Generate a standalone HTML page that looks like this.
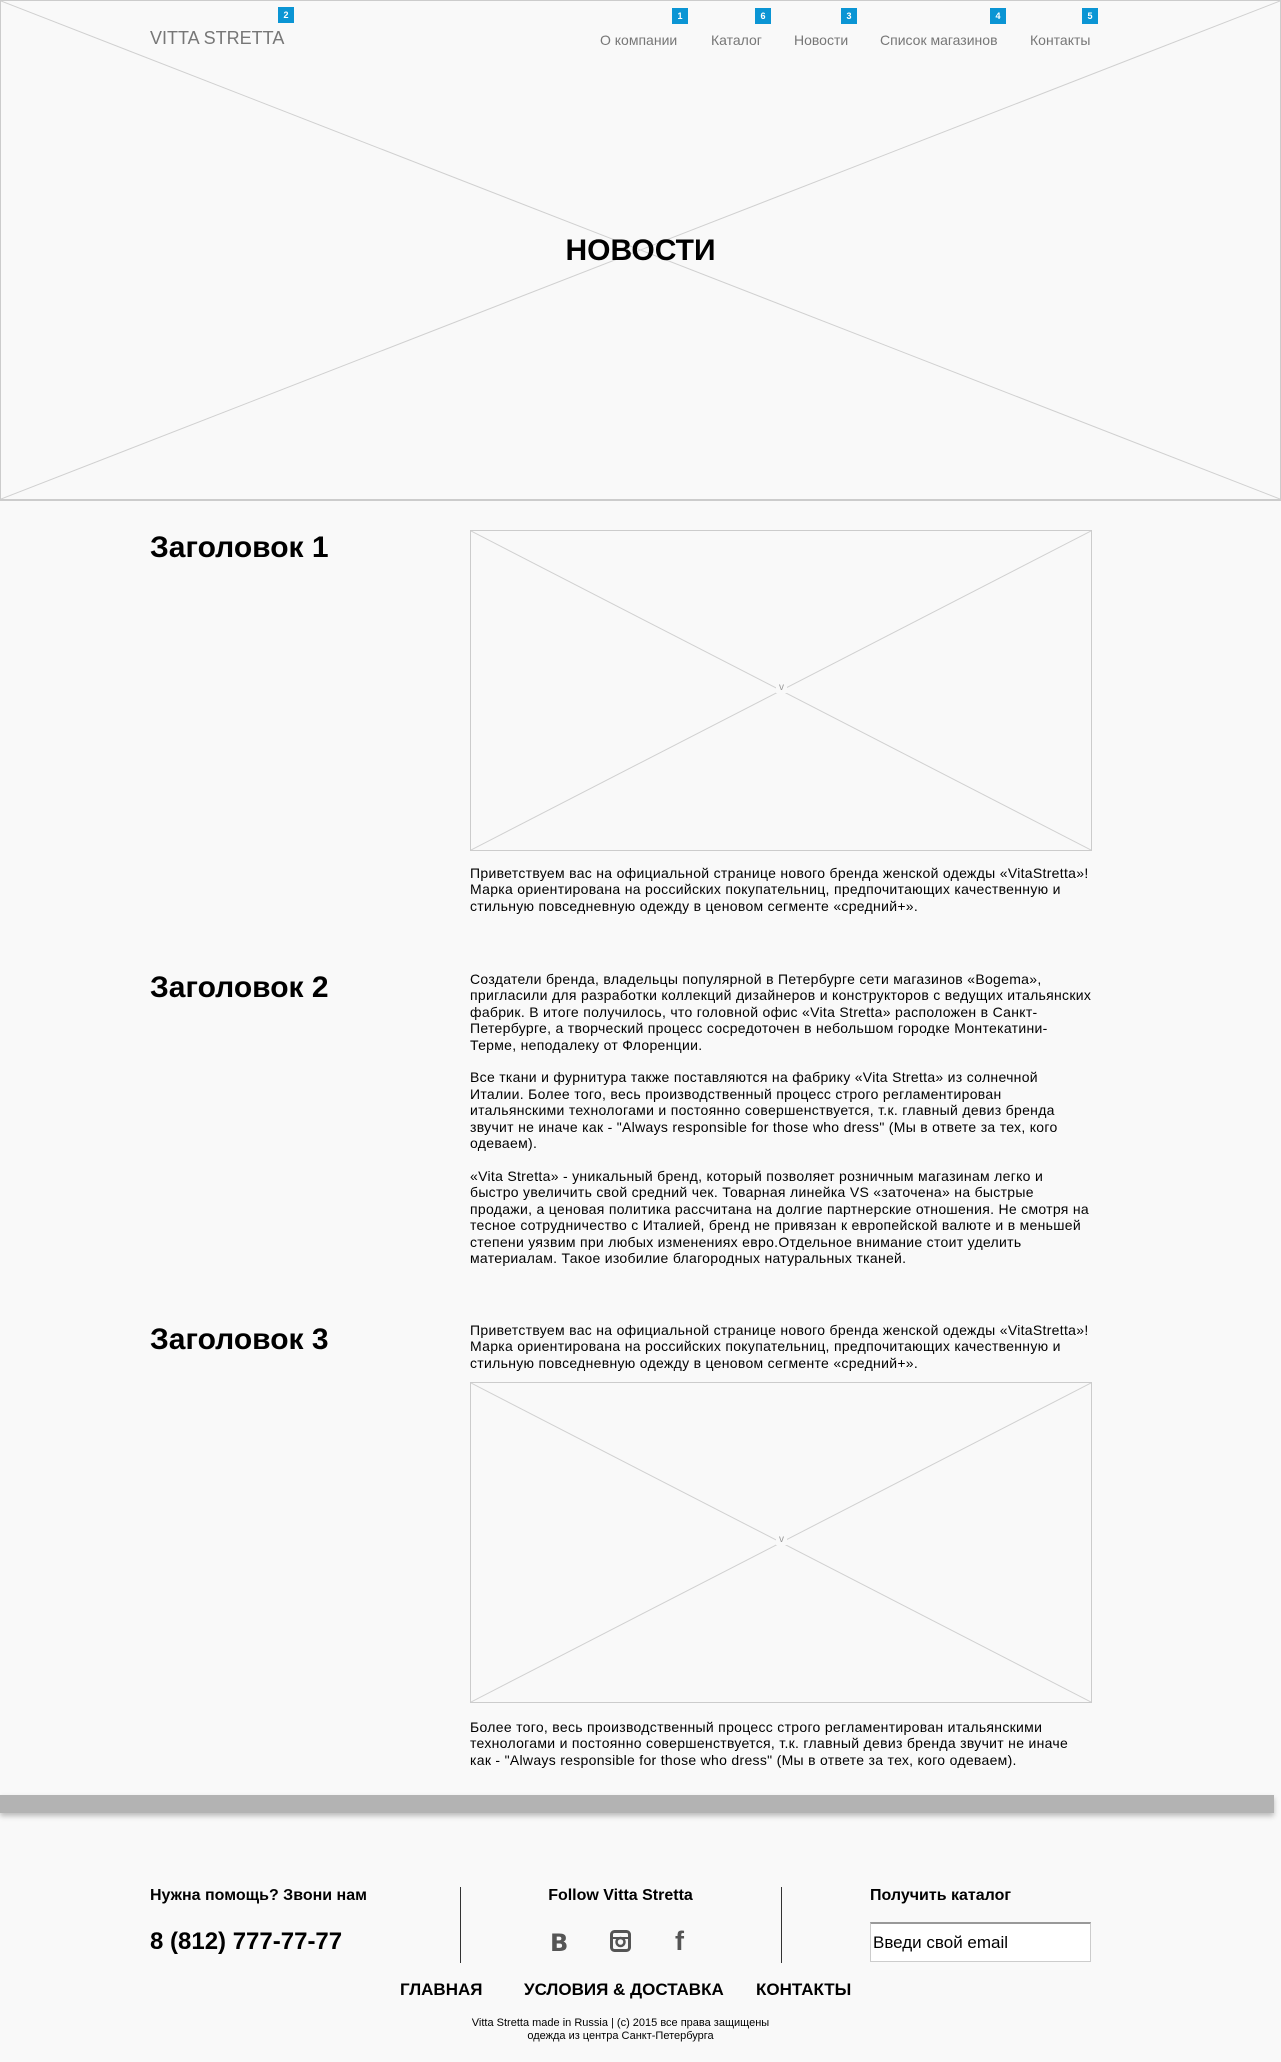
<!DOCTYPE html>
<html><head><meta charset="utf-8"><style>
*{margin:0;padding:0;box-sizing:border-box}
body{width:1281px;height:2062px;background:#f9f9f9;font-family:"Liberation Sans",Arial,sans-serif;position:relative;overflow:hidden;color:#000}
.a{position:absolute}
.ph{position:absolute;border:1px solid #ccc}
.ph svg{position:absolute;left:0;top:0;width:100%;height:100%}
.badge{position:absolute;width:16px;height:16px;background:#0b95d4;color:#fff;font-size:9px;font-weight:bold;text-align:center;line-height:16px}
.nav{position:absolute;top:32px;font-size:14px;color:#777;white-space:nowrap}
h2{position:absolute;left:150px;font-size:30px;font-weight:bold;white-space:nowrap}
.t{position:absolute;left:470px;font-size:14px;letter-spacing:0.3px;line-height:16.4px;white-space:nowrap}
.fh{position:absolute;top:1887px;font-size:16px;font-weight:bold;white-space:nowrap}
.fl{position:absolute;top:1980px;font-size:17px;font-weight:bold;white-space:nowrap}
</style></head><body>
<div class="ph" style="left:0;top:0;width:1281px;height:501px;border-width:1px 1px 2px 1px">
<svg viewBox="0 0 1281 501" preserveAspectRatio="none"><line x1="0" y1="0" x2="1281" y2="501" stroke="#d0d0d0"/><line x1="1281" y1="0" x2="0" y2="501" stroke="#d0d0d0"/></svg></div>
<div class="a" style="left:150px;top:28px;font-size:18px;color:#777">VITTA STRETTA</div>
<div class="badge" style="left:278px;top:7px">2</div>
<div class="nav" style="left:600px">О компании</div><div class="badge" style="left:672px;top:8px">1</div>
<div class="nav" style="left:711px">Каталог</div><div class="badge" style="left:755px;top:8px">6</div>
<div class="nav" style="left:794px">Новости</div><div class="badge" style="left:841px;top:8px">3</div>
<div class="nav" style="left:880px">Список магазинов</div><div class="badge" style="left:990px;top:8px">4</div>
<div class="nav" style="left:1030px">Контакты</div><div class="badge" style="left:1082px;top:8px">5</div>
<div class="a" style="left:0;width:1281px;top:234px;text-align:center;font-size:30px;font-weight:bold">НОВОСТИ</div>

<h2 style="top:531px">Заголовок 1</h2>
<div class="ph" style="left:470px;top:530px;width:622px;height:321px"><svg viewBox="0 0 622 321" preserveAspectRatio="none"><line x1="0" y1="0" x2="622" y2="321" stroke="#d0d0d0"/><line x1="622" y1="0" x2="0" y2="321" stroke="#d0d0d0"/></svg><div class="a" style="left:305px;top:151px;font-size:10px;color:#999;background:#f9f9f9;padding:0 3px">v</div></div>
<div class="t" style="top:865px">Приветствуем вас на официальной странице нового бренда женской одежды «VitaStretta»!<br>Марка ориентирована на российских покупательниц, предпочитающих качественную и<br>стильную повседневную одежду в ценовом сегменте «средний+».</div>

<h2 style="top:971px">Заголовок 2</h2>
<div class="t" style="top:971px">Создатели бренда, владельцы популярной в Петербурге сети магазинов «Bogema»,<br>пригласили для разработки коллекций дизайнеров и конструкторов с ведущих итальянских<br>фабрик. В итоге получилось, что головной офис «Vita Stretta» расположен в Санкт-<br>Петербурге, а творческий процесс сосредоточен в небольшом городке Монтекатини-<br>Терме, неподалеку от Флоренции.<br><br>Все ткани и фурнитура также поставляются на фабрику «Vita Stretta» из солнечной<br>Италии. Более того, весь производственный процесс строго регламентирован<br>итальянскими технологами и постоянно совершенствуется, т.к. главный девиз бренда<br>звучит не иначе как - "Always responsible for those who dress" (Мы в ответе за тех, кого<br>одеваем).<br><br>«Vita Stretta» - уникальный бренд, который позволяет розничным магазинам легко и<br>быстро увеличить свой средний чек. Товарная линейка VS «заточена» на быстрые<br>продажи, а ценовая политика рассчитана на долгие партнерские отношения. Не смотря на<br>тесное сотрудничество с Италией, бренд не привязан к европейской валюте и в меньшей<br>степени уязвим при любых изменениях евро.Отдельное внимание стоит уделить<br>материалам. Такое изобилие благородных натуральных тканей.</div>

<h2 style="top:1323px">Заголовок 3</h2>
<div class="t" style="top:1322px">Приветствуем вас на официальной странице нового бренда женской одежды «VitaStretta»!<br>Марка ориентирована на российских покупательниц, предпочитающих качественную и<br>стильную повседневную одежду в ценовом сегменте «средний+».</div>
<div class="ph" style="left:470px;top:1382px;width:622px;height:321px"><svg viewBox="0 0 622 321" preserveAspectRatio="none"><line x1="0" y1="0" x2="622" y2="321" stroke="#d0d0d0"/><line x1="622" y1="0" x2="0" y2="321" stroke="#d0d0d0"/></svg><div class="a" style="left:305px;top:151px;font-size:10px;color:#999;background:#f9f9f9;padding:0 3px">v</div></div>
<div class="t" style="top:1719px">Более того, весь производственный процесс строго регламентирован итальянскими<br>технологами и постоянно совершенствуется, т.к. главный девиз бренда звучит не иначе<br>как - "Always responsible for those who dress" (Мы в ответе за тех, кого одеваем).</div>

<div class="a" style="left:0;top:1795px;width:1274px;height:18px;background:#b3b3b3;box-shadow:0 3px 5px rgba(0,0,0,.25)"></div>

<div class="fh" style="left:150px">Нужна помощь? Звони нам</div>
<div class="a" style="left:150px;top:1928px;font-size:24px;font-weight:bold">8 (812) 777-77-77</div>
<div class="a" style="left:460px;top:1887px;width:1px;height:76px;background:#333"></div>
<div class="a" style="left:781px;top:1887px;width:1px;height:76px;background:#333"></div>
<div class="fh" style="left:0;width:1241px;text-align:center">Follow Vitta Stretta</div>
<div class="a" style="left:550px;top:1929px;font-size:24px;font-weight:bold;color:#555;font-family:'DejaVu Sans',sans-serif">B</div>
<svg class="a" style="left:610px;top:1930px" width="21" height="22" viewBox="0 0 21 22"><rect x="1.5" y="1.5" width="18" height="19" rx="3" fill="none" stroke="#555" stroke-width="3"/><rect x="1.5" y="7" width="18" height="2" fill="#555"/><circle cx="10.5" cy="12" r="4" fill="none" stroke="#555" stroke-width="2.5"/></svg>
<div class="a" style="left:675px;top:1926px;font-size:27px;font-weight:bold;color:#555">f</div>
<div class="fh" style="left:870px">Получить каталог</div>
<div class="a" style="left:870px;top:1922px;width:221px;height:40px;background:#fff;border:1px solid #ccc;border-top:2px solid #999;font-size:17px;padding:9px 2px">Введи свой email</div>
<div class="fl" style="left:400px">ГЛАВНАЯ</div>
<div class="fl" style="left:524px">УСЛОВИЯ &amp; ДОСТАВКА</div>
<div class="fl" style="left:756px">КОНТАКТЫ</div>
<div class="a" style="left:0;width:1241px;top:2017px;text-align:center;font-size:11px;line-height:13px">Vitta Stretta made in Russia | (c) 2015 все права защищены<br>одежда из центра Санкт-Петербурга</div>
</body></html>
